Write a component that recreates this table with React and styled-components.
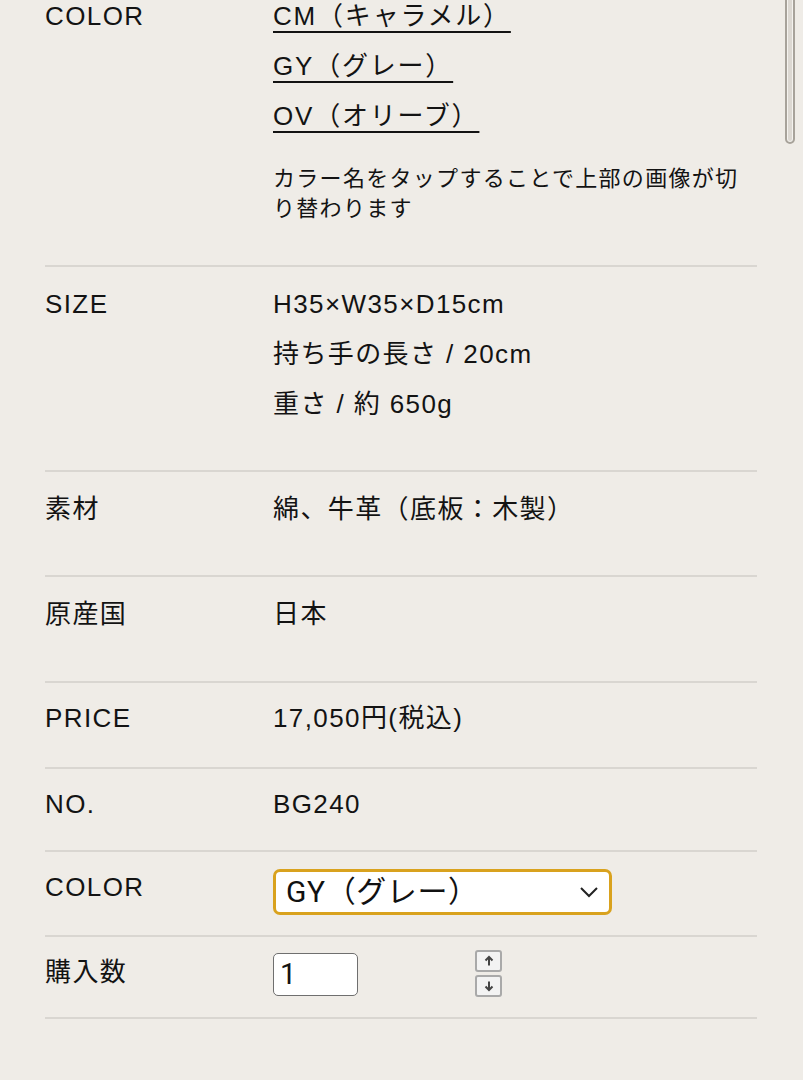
import React from 'react';
import styled, { createGlobalStyle } from 'styled-components';

const GlobalStyle = createGlobalStyle`
    html, body {
        margin: 0;
        padding: 0;
        background: #efece7;
        overflow: hidden;
    }
    body {
        font-family: "Liberation Sans", "Noto Sans CJK JP", sans-serif;
        color: #131313;
    }
`;

const Page = styled.div`
    width: 803px;
    height: 1080px;
    overflow: hidden;
`;

const Spec = styled.div`
    margin: -21px 46px 0 45px;
`;

const Row = styled.div`
    display: grid;
    grid-template-columns: 228px 1fr;
    padding: ${p => p.$pt ?? 12}px 0 ${p => p.$pb ?? 41}px;
    border-bottom: 2px solid #d9d6d1;
    font-size: 26px;
    line-height: 50px;
    letter-spacing: 1.4px;
`;

const Label = styled.div`
    white-space: nowrap;
`;

const Value = styled.div`
    display: flex;
    flex-direction: column;
    align-items: flex-start;
`;

const ColorLink = styled.a`
    color: #131313;
    letter-spacing: 1.8px;
    text-decoration: underline;
    text-decoration-thickness: 2px;
    text-underline-offset: 6px;
`;

const Note = styled.p`
    margin: 23px 0 0;
    font-size: 22px;
    letter-spacing: 1.3px;
    line-height: 30px;
`;

const Select = styled.div`
    margin-top: 7px;
    width: 339px;
    height: 46px;
    box-sizing: border-box;
    border: 3px solid #d9a21e;
    border-radius: 7px;
    background: #fff;
    display: flex;
    align-items: center;
    justify-content: space-between;
    padding: 0 10px 0 10px;
    font-size: 30px;
    letter-spacing: 0.6px;
    color: #111;
    font-family: Roboto, "Noto Sans CJK JP", sans-serif;
`;

const QtyWrap = styled.div`
    display: flex;
    align-items: flex-start;
    gap: 117px;
    margin-top: 6px;
`;

const QtyInput = styled.div`
    width: 85px;
    height: 43px;
    box-sizing: border-box;
    border: 1.5px solid #6f6f6f;
    border-radius: 5px;
    background: #fff;
    font-size: 29px;
    line-height: 40px;
    padding-left: 6px;
    font-family: Roboto, sans-serif;
`;

const Spin = styled.div`
    display: flex;
    flex-direction: column;
    gap: 3px;
    margin-top: -3px;
`;

const SpinBtn = styled.div`
    width: 27px;
    height: 22px;
    box-sizing: border-box;
    border: 2px solid #a9a9a9;
    border-radius: 3px;
    background: #f3f3f3;
    display: flex;
    align-items: center;
    justify-content: center;
`;

const Scroll = styled.div`
    position: fixed;
    top: -6px;
    right: 8px;
    width: 10px;
    height: 150px;
    box-sizing: border-box;
    border: 2px solid #a7a29a;
    border-radius: 5px;
    background: #dcd8d2;
    box-shadow: inset 0 0 0 1px #f4f2ee;
`;

const Arrow = ({ down }) => (
    <svg width="12" height="12" viewBox="0 0 12 12" style={{ transform: down ? 'rotate(180deg)' : 'none' }}>
        <path d="M6 10.5V2M2.5 5.5L6 2l3.5 3.5" fill="none" stroke="#444" strokeWidth="2" />
    </svg>
);

const App = () => (
    <Page>
        <GlobalStyle />
        <Spec>
            <Row>
                <Label>COLOR</Label>
                <Value>
                    <ColorLink>CM（キャラメル）</ColorLink>
                    <ColorLink>GY（グレー）</ColorLink>
                    <ColorLink>OV（オリーブ）</ColorLink>
                    <Note>カラー名をタップすることで上部の画像が切り替わります</Note>
                </Value>
            </Row>
            <Row>
                <Label>SIZE</Label>
                <Value>
                    <div>H35×W35×D15cm</div>
                    <div>持ち手の長さ / 20cm</div>
                    <div>重さ / 約 650g</div>
                </Value>
            </Row>
            <Row>
                <Label>素材</Label>
                <Value>綿、牛革（底板：木製）</Value>
            </Row>
            <Row $pb={42}>
                <Label>原産国</Label>
                <Value>日本</Value>
            </Row>
            <Row $pt={10} $pb={24}>
                <Label>PRICE</Label>
                <Value>17,050円(税込)</Value>
            </Row>
            <Row $pt={10} $pb={21}>
                <Label>NO.</Label>
                <Value>BG240</Value>
            </Row>
            <Row $pt={10} $pb={20}>
                <Label>COLOR</Label>
                <Value>
                    <Select>
                        <span>GY（グレー）</span>
                        <svg width="20" height="12" viewBox="0 0 20 12">
                            <path d="M2 2l8 8 8-8" fill="none" stroke="#222" strokeWidth="2" />
                        </svg>
                    </Select>
                </Value>
            </Row>
            <Row $pt={10} $pb={20}>
                <Label>購入数</Label>
                <QtyWrap>
                    <QtyInput>1</QtyInput>
                    <Spin>
                        <SpinBtn><Arrow /></SpinBtn>
                        <SpinBtn><Arrow down /></SpinBtn>
                    </Spin>
                </QtyWrap>
            </Row>
        </Spec>
        <Scroll />
    </Page>
);

export default App;
